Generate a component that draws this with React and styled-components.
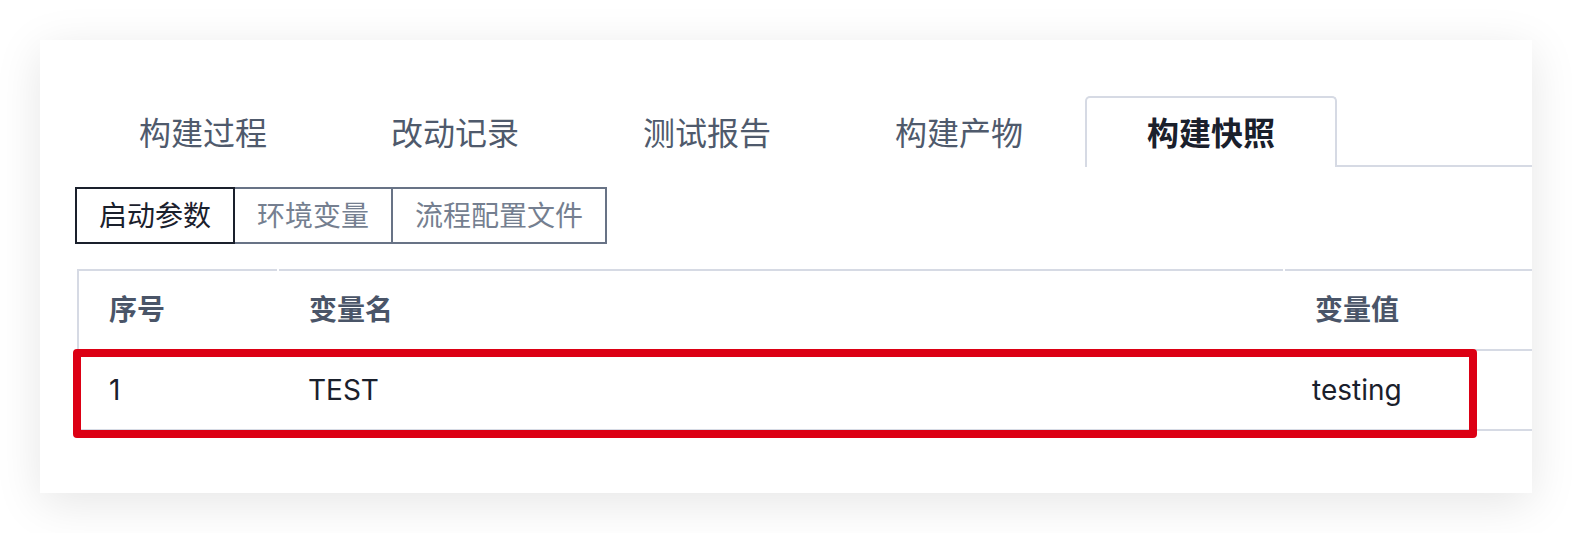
import React from "react";
import styled, { createGlobalStyle } from "styled-components";

const Global = createGlobalStyle`
  html, body { margin: 0; padding: 0; background: #ffffff; }
  body { font-family: "Inter", "Noto Sans CJK SC", sans-serif; }
`;

const LINE = "#d6dae4";

const Page = styled.div`
  padding: 40px;
  width: 1572px;
  box-sizing: border-box;
`;

const Card = styled.div`
  height: 453px;
  background: #fff;
  box-shadow: 0 10px 44px rgba(0, 0, 0, 0.1);
  padding: 56px 0 0 37px;
  box-sizing: border-box;
  overflow: hidden;
`;

const TabBar = styled.div`
  display: flex;
  height: 71px;
  border-bottom: 2px solid ${LINE};
  box-sizing: border-box;
`;

const Tab = styled.div`
  width: 252px;
  box-sizing: border-box;
  display: flex;
  align-items: center;
  justify-content: center;
  font-size: 32px;
  line-height: 1;
  padding-top: 2px;
  color: ${(p) => (p.$active ? "#1a202c" : "#4f5a6c")};
  font-weight: ${(p) => (p.$active ? 700 : 400)};
  background: #fff;
  border: 2px solid ${(p) => (p.$active ? LINE : "transparent")};
  border-bottom: none;
  border-radius: 5px 5px 0 0;
  height: 71px;
`;

const SubTabs = styled.div`
  display: flex;
  margin: 20px 0 0 -2px;
`;

const SubTab = styled.div`
  height: 57px;
  box-sizing: border-box;
  padding: 1px 22px 0 22px;
  display: flex;
  align-items: center;
  font-size: 28px;
  line-height: 1;
  border: 2px solid ${(p) => (p.$active ? "#1a202c" : "#687386")};
  color: ${(p) => (p.$active ? "#1a202c" : "#757f90")};
  position: relative;
  z-index: ${(p) => (p.$active ? 1 : 0)};
  & + & { margin-left: -2px; }
`;

const Table = styled.div`
  position: relative;
  margin-top: 25px;
`;

const Row = styled.div`
  display: grid;
  grid-template-columns: 200px 1004px 1fr;
  column-gap: ${(p) => (p.$head ? "2px" : "0")};
  border-top: ${(p) => (p.$head ? "none" : `2px solid ${LINE}`)};
  border-bottom: ${(p) => (p.$last ? `2px solid ${LINE}` : "none")};
`;

const HeadCell = styled.div`
  height: 80px;
  box-sizing: border-box;
  border-top: 2px solid ${LINE};
  border-left: ${(p) => (p.$first ? `2px solid ${LINE}` : "none")};
  padding: 0 30px;
  display: flex;
  align-items: center;
  font-size: 28px;
  font-weight: 700;
  color: #4a5568;
  line-height: 1;
`;

const Cell = styled.div`
  height: 78px;
  padding: 0 30px 0 ${(p) => (p.$first ? "32px" : "31px")};
  display: flex;
  align-items: center;
  font-size: 28px;
  color: #1a202c;
  line-height: 1;
`;

const Highlight = styled.div`
  position: absolute;
  left: -4px;
  top: 80px;
  width: 1404px;
  height: 89px;
  box-sizing: border-box;
  border: 8px solid #dc0014;
  border-radius: 4px;
  pointer-events: none;
`;

const tabs = ["构建过程", "改动记录", "测试报告", "构建产物", "构建快照"];
const subTabs = ["启动参数", "环境变量", "流程配置文件"];

export default function App() {
  return (
    <>
      <Global />
      <Page>
        <Card>
          <TabBar>
            {tabs.map((t, i) => (
              <Tab key={t} $active={i === 4}>
                {t}
              </Tab>
            ))}
          </TabBar>
          <SubTabs>
            {subTabs.map((t, i) => (
              <SubTab key={t} $active={i === 0}>
                {t}
              </SubTab>
            ))}
          </SubTabs>
          <Table>
            <Row $head>
              <HeadCell $first>序号</HeadCell>
              <HeadCell>变量名</HeadCell>
              <HeadCell>变量值</HeadCell>
            </Row>
            <Row $last>
              <Cell $first>1</Cell>
              <Cell>TEST</Cell>
              <Cell>testing</Cell>
            </Row>
            <Highlight />
          </Table>
        </Card>
      </Page>
    </>
  );
}
